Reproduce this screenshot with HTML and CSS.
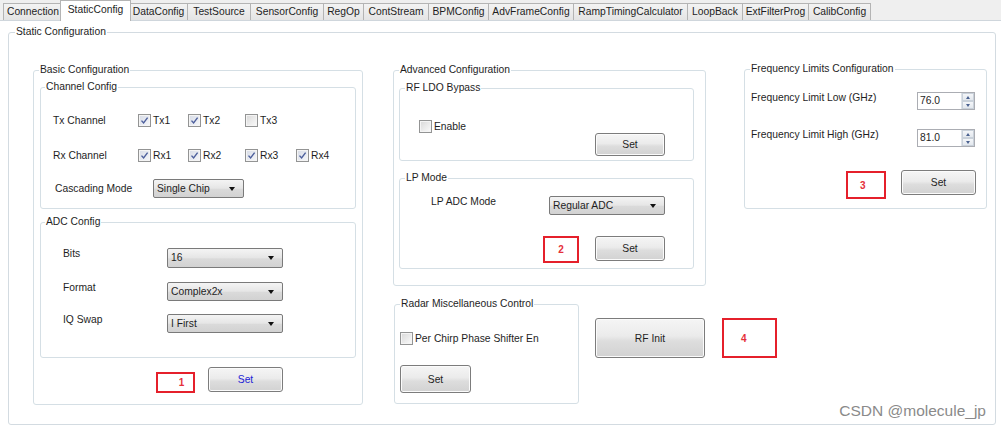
FILE: index.html
```html
<!DOCTYPE html>
<html>
	<head>
		<meta charset="utf-8" />
		<title>StaticConfig</title>
		<link rel="stylesheet" href="styles.css">
	</head>
	<body>
		<div class="tabs">
			<span class="tab w-conn">Connection</span>
			<span class="tab active w-static">StaticConfig</span>
			<span class="tab w-data">DataConfig</span>
			<span class="tab w-test">TestSource</span>
			<span class="tab w-sensor">SensorConfig</span>
			<span class="tab w-regop">RegOp</span>
			<span class="tab w-cont">ContStream</span>
			<span class="tab w-bpm">BPMConfig</span>
			<span class="tab w-adv">AdvFrameConfig</span>
			<span class="tab w-ramp">RampTimingCalculator</span>
			<span class="tab w-loop">LoopBack</span>
			<span class="tab w-ext">ExtFilterProg</span>
			<span class="tab w-calib">CalibConfig</span>
		</div>
		<div class="page">
			<fieldset class="grp static">
				<legend>Static Configuration</legend>
				<div class="cols">
					<!-- left column -->
					<fieldset class="grp basic">
						<legend>Basic Configuration</legend>
						<fieldset class="grp channel">
							<legend>Channel Config</legend>
							<div class="chgrid">
								<span>Tx Channel</span>
								<label class="chk"><i class="box on"><svg width="9" height="9" viewBox="0 0 9 9"><path d="M1.5 4.6 L3.6 7 L7.6 1.6" /></svg></i>Tx1</label>
								<label class="chk"><i class="box on"><svg width="9" height="9" viewBox="0 0 9 9"><path d="M1.5 4.6 L3.6 7 L7.6 1.6" /></svg></i>Tx2</label>
								<label class="chk"><i class="box"></i>Tx3</label>
								<span></span>
								<span>Rx Channel</span>
								<label class="chk"><i class="box on"><svg width="9" height="9" viewBox="0 0 9 9"><path d="M1.5 4.6 L3.6 7 L7.6 1.6" /></svg></i>Rx1</label>
								<label class="chk"><i class="box on"><svg width="9" height="9" viewBox="0 0 9 9"><path d="M1.5 4.6 L3.6 7 L7.6 1.6" /></svg></i>Rx2</label>
								<label class="chk"><i class="box on"><svg width="9" height="9" viewBox="0 0 9 9"><path d="M1.5 4.6 L3.6 7 L7.6 1.6" /></svg></i>Rx3</label>
								<label class="chk"><i class="box on"><svg width="9" height="9" viewBox="0 0 9 9"><path d="M1.5 4.6 L3.6 7 L7.6 1.6" /></svg></i>Rx4</label>
							</div>
							<div class="cascade">
								<span class="cas-lbl">Cascading Mode</span>
								<div class="combo cas-combo">Single Chip</div>
							</div>
						</fieldset>
						<fieldset class="grp adc">
							<legend>ADC Config</legend>
							<div class="adcrow first">
								<span class="adc-lbl">Bits</span>
								<div class="combo adc-combo">16</div>
							</div>
							<div class="adcrow r2">
								<span class="adc-lbl">Format</span>
								<div class="combo adc-combo">Complex2x</div>
							</div>
							<div class="adcrow r3">
								<span class="adc-lbl">IQ Swap</span>
								<div class="combo adc-combo">I First</div>
							</div>
						</fieldset>
						<div class="basic-set">
							<div class="mark m1">1</div>
							<div class="btn set-blue">Set</div>
						</div>
					</fieldset>

					<!-- middle column -->
					<div class="mid">
						<fieldset class="grp adv">
							<legend>Advanced Configuration</legend>
							<fieldset class="grp rfldo">
								<legend>RF LDO Bypass</legend>
								<div class="ldo-row">
									<label class="chk ldo-chk"><i class="box"></i>Enable</label>
									<div class="btn ldo-set">Set</div>
								</div>
							</fieldset>
							<fieldset class="grp lp">
								<legend>LP Mode</legend>
								<div class="lp-row">
									<span class="lp-lbl">LP ADC Mode</span>
									<div class="combo lp-combo">Regular ADC</div>
								</div>
								<div class="lp-row2">
									<div class="mark m2">2</div>
									<div class="btn lp-set">Set</div>
								</div>
							</fieldset>
						</fieldset>
						<div class="misc">
							<fieldset class="grp radar">
								<legend>Radar Miscellaneous Control</legend>
								<label class="chk radar-chk"><i class="box"></i>Per Chirp Phase Shifter En</label>
								<div class="btn radar-set">Set</div>
							</fieldset>
							<div class="btn rfinit">RF Init</div>
							<div class="mark m4">4</div>
						</div>
					</div>

					<!-- right column -->
					<fieldset class="grp freq">
						<legend>Frequency Limits Configuration</legend>
						<div class="frow f1">
							<span class="f-lbl">Frequency Limit Low (GHz)</span>
							<div class="spin"><span class="val">76.0</span><span class="arrows"><b class="up"></b><b class="down"></b></span></div>
						</div>
						<div class="frow f2">
							<span class="f-lbl">Frequency Limit High (GHz)</span>
							<div class="spin"><span class="val">81.0</span><span class="arrows"><b class="up"></b><b class="down"></b></span></div>
						</div>
						<div class="frow f3">
							<div class="mark m3">3</div>
							<div class="btn f-set">Set</div>
						</div>
					</fieldset>
				</div>
			</fieldset>
			<div class="watermark">CSDN @molecule_jp</div>
		</div>
	</body>
</html>
```

FILE: styles.css
```css
body {
	margin: 0;
	width: 1001px;
	height: 428px;
	overflow: hidden;
	background: #fff;
	font-family: "Liberation Sans", Arial, sans-serif;
	font-size: 10.3px;
	color: #1e1e1e;
}

/* tab strip */
.tabs {
	display: flex;
	align-items: flex-end;
	height: 20px;
	padding-left: 3px;
	background: #efefef;
}
.tab {
	box-sizing: border-box;
	height: 17px;
	line-height: 16px;
	text-align: center;
	border: 1px solid #b4b4b4;
	border-bottom: none;
	margin-right: -1px;
	background: linear-gradient(#f3f3f3, #e4e4e4);
	white-space: nowrap;
}
.tab.active {
	position: relative;
	z-index: 1;
	height: 21px;
	line-height: 17px;
	margin: 0 -2px -1px -2px;
	background: #fff;
}
.w-conn { width: 60px; }
.w-static { width: 71px; }
.w-data { width: 59px; }
.w-test { width: 64px; }
.w-sensor { width: 74px; }
.w-regop { width: 41px; }
.w-cont { width: 66px; }
.w-bpm { width: 61px; }
.w-adv { width: 86px; }
.w-ramp { width: 115px; }
.w-loop { width: 56px; }
.w-ext { width: 67px; }
.w-calib { width: 63px; }

.page {
	position: relative;
	height: 407px;
	border-top: 1px solid #cfd6dc;
}

/* group boxes */
.grp {
	box-sizing: border-box;
	margin: 0;
	padding: 0;
	min-width: 0;
	flex: none;
	border: 1px solid #d5dfe5;
	border-radius: 3px;
}
legend {
	padding: 0 1px;
	margin-left: 5px;
	line-height: 12px;
	white-space: nowrap;
}

.static {
	width: 988px;
	height: 399px;
	margin: 5px 0 0 8px;
	border-color: #d3dbe1;
}
.static > legend { margin-left: 6px; }

.cols {
	display: flex;
	align-items: flex-start;
	padding: 26px 0 0 24px;
}

/* basic */
.basic {
	width: 330px;
	height: 341px;
}
.channel, .adc {
	width: 316px;
	margin-left: 6px;
}
.channel > legend, .adc > legend { margin-left: 4px; }
.channel {
	height: 128px;
	margin-top: 5px;
}
.chgrid {
	display: grid;
	grid-template-columns: 85px 50px 57px 51px auto;
	grid-auto-rows: 20px;
	row-gap: 15px;
	align-items: center;
	padding: 17px 0 0 12px;
}
.chk {
	display: flex;
	align-items: center;
	gap: 2px;
	white-space: nowrap;
}
.box {
	box-sizing: border-box;
	flex: none;
	width: 13px;
	height: 13px;
	border: 1px solid #939494;
	background: linear-gradient(135deg, #d8d8d8, #fbfbfb);
	box-shadow: inset 0 0 0 1px #f4f4f4;
	display: flex;
	align-items: center;
	justify-content: center;
}
.box.on {
	background: linear-gradient(135deg, #d6dbe6, #f6f7fa);
}
.box svg path {
	fill: none;
	stroke: #4c5f9c;
	stroke-width: 1.4;
}
.cascade {
	display: flex;
	align-items: center;
	margin-top: 14px;
	padding-left: 14px;
}
.cas-lbl { width: 98px; }
.cas-combo { width: 91px; }

.adc {
	height: 142px;
	margin-top: 7px;
}
.adcrow {
	display: flex;
	align-items: flex-start;
	padding-left: 22px;
}
.adcrow.first { margin-top: 20px; }
.adcrow.r2 { margin-top: 14px; }
.adcrow.r3 { margin-top: 13px; }
.adc-lbl {
	width: 104px;
	line-height: 12px;
}
.adc-combo { width: 116px; }
.adcrow.first .adc-combo { height: 20px; }

.basic-set {
	display: flex;
	align-items: flex-start;
	margin-top: 9px;
	padding-left: 122px;
}
.m1 {
	width: 39px;
	height: 21px;
	margin-top: 5px;
	justify-content: flex-start;
	padding-left: 12px;
}
.set-blue {
	width: 75px;
	height: 25px;
	margin-left: 13px;
	color: #2323d6;
}

/* combo boxes */
.combo {
	position: relative;
	box-sizing: border-box;
	height: 19px;
	line-height: 17px;
	padding-left: 3px;
	border: 1px solid #7a7a7a;
	border-radius: 2px;
	background: linear-gradient(#f4f4f4, #e6e6e6 48%, #dadada 55%, #d2d2d2);
}
.combo::after {
	content: "";
	position: absolute;
	right: 8px;
	top: 7px;
	border-left: 3.5px solid transparent;
	border-right: 3.5px solid transparent;
	border-top: 4px solid #111;
}

/* buttons */
.btn {
	box-sizing: border-box;
	flex: none;
	display: flex;
	align-items: center;
	justify-content: center;
	border: 1px solid #7c7c7c;
	border-radius: 3px;
	background: linear-gradient(#f5f5f5, #ebebeb 45%, #dddddd 58%, #d2d2d2);
	box-shadow: inset 0 0 0 1px #fbfbfb;
}

.mark {
	box-sizing: border-box;
	flex: none;
	border: 2px solid #e5202b;
	color: #e5303a;
	font-size: 10px;
	font-weight: bold;
	display: flex;
	align-items: center;
	justify-content: center;
}

/* middle */
.mid {
	display: flex;
	flex-direction: column;
	flex: none;
	margin-left: 30px;
	width: 313px;
}
.adv {
	width: 313px;
	height: 222px;
}
.rfldo, .lp {
	width: 295px;
	margin-left: 5px;
}
.rfldo {
	height: 79px;
	margin-top: 6px;
}
.ldo-row {
	display: flex;
	align-items: flex-start;
}
.ldo-chk {
	margin: 26px 0 0 19px;
}
.ldo-set {
	width: 70px;
	height: 23px;
	margin: 39px 28px 0 auto;
}
.lp {
	height: 97px;
	margin-top: 11px;
}
.lp-row {
	display: flex;
	align-items: flex-start;
	margin-top: 12px;
}
.lp-lbl {
	width: 118px;
	margin-left: 31px;
	line-height: 12px;
}
.lp-combo { width: 116px; }
.lp-row2 {
	display: flex;
	align-items: flex-start;
	margin: 21px 0 0 143px;
}
.m2 {
	width: 36px;
	height: 27px;
}
.lp-set {
	width: 70px;
	height: 25px;
	margin-left: 16px;
}

.misc {
	display: flex;
	align-items: flex-start;
	margin-top: 12px;
}
.radar {
	width: 185px;
	height: 106px;
	margin-left: 1px;
}
.radar-chk {
	margin: 22px 0 0 5px;
}
.radar-set {
	width: 71px;
	height: 28px;
	margin: 20px 0 0 5px;
}
.rfinit {
	width: 110px;
	height: 40px;
	margin: 20px 0 0 16px;
}
.m4 {
	width: 55px;
	height: 40px;
	margin: 20px 0 0 17px;
	justify-content: flex-start;
	padding-left: 17px;
}

/* right */
.freq {
	width: 243px;
	height: 146px;
	margin: -1px 0 0 38px;
}
.frow {
	display: flex;
	align-items: flex-start;
}
.f1 { margin-top: 17px; }
.f2 { margin-top: 19px; }
.f-lbl {
	width: 166px;
	padding-left: 6px;
	line-height: 12px;
}
.spin {
	box-sizing: border-box;
	display: flex;
	width: 58px;
	height: 18px;
	border: 1px solid #abadb3;
	background: #fff;
}
.spin .val {
	flex: 1;
	line-height: 16px;
	padding-left: 2px;
}
.arrows {
	display: flex;
	flex-direction: column;
	width: 12px;
	border-left: 1px solid #dde2e8;
}
.arrows b {
	flex: 1;
	display: flex;
	align-items: center;
	justify-content: center;
	background: linear-gradient(#f4f6f9, #e3e8ee);
	border: 1px solid #c9d1da;
}
.arrows .up::before {
	content: "";
	border-left: 2.5px solid transparent;
	border-right: 2.5px solid transparent;
	border-bottom: 3px solid #4a6190;
}
.arrows .down::before {
	content: "";
	border-left: 2.5px solid transparent;
	border-right: 2.5px solid transparent;
	border-top: 3px solid #4a6190;
}
.f3 { margin-top: 23px; }
.m3 {
	width: 40px;
	height: 28px;
	margin: 1px 0 0 101px;
	justify-content: flex-start;
	padding-left: 12px;
}
.f-set {
	width: 75px;
	height: 25px;
	margin-left: 15px;
}

.watermark {
	position: absolute;
	right: 15px;
	bottom: 8px;
	font-size: 15.5px;
	color: #8a8a8a;
}
```
